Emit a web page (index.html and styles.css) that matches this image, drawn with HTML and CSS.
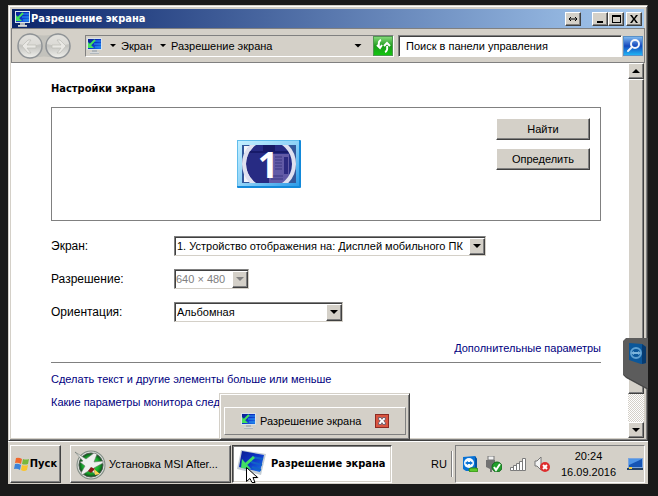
FILE: index.html
```html
<!DOCTYPE html>
<html lang="ru">
<head>
<meta charset="utf-8">
<title>Разрешение экрана</title>
<link rel="stylesheet" href="styles.css">
</head>
<body>
<svg class="defs" aria-hidden="true">
  <defs>
    <linearGradient id="blue" x1="0" y1="0" x2="1" y2="1"><stop offset="0" stop-color="#0a1c8c"/><stop offset=".5" stop-color="#0d34c8"/><stop offset="1" stop-color="#1c7ae8"/></linearGradient>
    <linearGradient id="silver" x1="0" y1="0" x2="0" y2="1"><stop offset="0" stop-color="#d8d8d6"/><stop offset=".5" stop-color="#c4c4c0"/><stop offset="1" stop-color="#f0f0ec"/></linearGradient>
    <linearGradient id="glass" x1="0" y1="0" x2="1" y2="1"><stop offset="0" stop-color="#c4efff"/><stop offset=".5" stop-color="#8fd2f7"/><stop offset="1" stop-color="#2b9be8"/></linearGradient>
    <radialGradient id="green"><stop offset="0" stop-color="#3cff48"/><stop offset=".7" stop-color="#17a82c"/><stop offset="1" stop-color="#0b4d18"/></radialGradient>
    <symbol id="display" viewBox="0 0 16 16">
      <path d="M1 0h15v12H1z" fill="#d7e2e8"/><path d="M2 1h13v10H2z" fill="url(#blue)"/>
      <path d="M9 3h6M8 6h7M9 9h6" stroke="#2b9af4"/>
      <path d="M9 2 4 7" stroke="#43e05c" stroke-width="2"/><path d="M2 4v6h6z" fill="#43e05c"/>
      <path d="M6 12h5v2H6z" fill="#aeb4b8"/><path d="M4 14h9v1H4z" fill="#d6dadd"/><path d="M4 15h9v1H4z" fill="#b2b8bc"/>
    </symbol>
    <symbol id="teamviewer" viewBox="0 0 16 16">
      <path d="M1 1l12-1 2 3v12H4L1 13z" fill="#0872d6"/><path d="M13 0l2 3v12l-2-2z" fill="#0453a4"/>
      <circle cx="7" cy="7" r="5" fill="#f4faff"/><path d="M3 7l3-2v1h2V5l3 2-3 2V8H6v1z" fill="#0872d6"/>
    </symbol>
  </defs>
</svg>
<div class="desktop">
  <section class="window">
    <header class="titlebar">
      <svg class="icon16"><use href="#display"/></svg>
      <h1>Разрешение экрана</h1>
      <button class="caption" aria-label="Изменить размер"><svg viewBox="0 0 10 8"><path d="M1 4h8M3 2 1 4l2 2M7 2l2 2-2 2" fill="none" stroke="#000"/></svg></button>
      <div class="caption-group">
        <button class="caption" aria-label="Свернуть"><svg viewBox="0 0 10 8"><path d="M2 6h6v2H2z"/></svg></button><button class="caption" aria-label="Развернуть"><svg viewBox="0 0 10 8"><path d="M1 0h9v8H1zM2 2v5h7V2z" fill-rule="evenodd"/></svg></button>
      </div>
      <button class="caption close" aria-label="Закрыть"><svg viewBox="0 0 10 8"><path d="M1 0h2l2 3 2-3h2L6 4l3 4H7L5 5 3 8H1l3-4z"/></svg></button>
    </header>
    <nav class="toolbar">
      <svg class="travel" viewBox="0 0 56 28" role="img" aria-label="Назад и вперёд">
        <path d="M13 1Q28 6 43 1v26q-15-5-30 0z" fill="#c3c2bc"/>
        <g fill="url(#silver)" stroke="#8f9396" stroke-width="1.500"><circle cx="14" cy="14" r="12"/><circle cx="42" cy="14" r="12"/></g>
        <path d="M3 12a11 9 0 0 1 22 0q-11 3-22 0zM31 12a11 9 0 0 1 22 0q-11 3-22 0z" fill="#ecebe6" opacity=".55"/>
        <g fill="#e9e8e4" stroke="#bcbbb6" stroke-width=".7"><path d="M6 14l6-6h3l-4 5h9v3h-9l4 5h-3z"/><path d="M50 14l-6-6h-3l4 5h-9v3h9l-4 5h3z"/></g>
      </svg>
      <div class="address">
        <svg class="icon16"><use href="#display"/></svg>
        <i class="arrow small"></i><a href="#">Экран</a><i class="arrow small"></i><a href="#" class="here">Разрешение экрана</a>
        <i class="arrow"></i>
        <button class="refresh" aria-label="Обновить"><svg viewBox="0 0 18 18"><path d="M7 3Q4 4 5 9M3 8l3 3 2-3M11 15q3-1 2-6M10 9l3-3 3 3" fill="none" stroke="#fff" stroke-width="2"/></svg></button>
      </div>
      <input class="search" type="text" aria-label="Поиск" value="Поиск в панели управления">
      <button class="find" aria-label="Найти в панели"><svg viewBox="0 0 18 18"><circle cx="11" cy="7" r="4" fill="none" stroke="#f2f5fa" stroke-width="2"/><path d="M8 10l-4 4" stroke="#f2f5fa" stroke-width="2" stroke-linecap="round"/></svg></button>
    </nav>
    <div class="view">
      <main>
        <h2>Настройки экрана</h2>
        <div class="preview">
          <svg class="monitor" viewBox="0 0 64 48" role="img" aria-label="Монитор 1">
            <rect width="64" height="48" rx="1" fill="#1289da"/><rect width="62" height="46" fill="#61bdec"/><rect x="1" y="1" width="61" height="45" fill="url(#glass)"/>
            <svg x="5" y="5" width="54" height="38" viewBox="0 0 54 38">
              <path d="M0 0h54v38H0z" fill="#33589b"/><path d="M2 1h9v36H2z" fill="#f4f5fa"/><path d="M5 3h2v2H5z" fill="#445"/><path d="M2 8h6v1H2z" fill="#667"/>
              <circle cx="27" cy="19" r="23" fill="#272b83"/><path d="M27 9h20v29H27z" fill="#625aa6"/><path d="M21 0h12v6H21z" fill="#181a65"/>
              <path d="M33 12h7M33 15h7M33 18h7M33 21h7M33 24h7M29 31h12M29 34h12" stroke="#3b3682"/><path d="M42 12h4v17h-4z" fill="#2c2980"/><path d="M5 7h43" stroke="#171a69" stroke-width="2"/>
              <circle cx="27" cy="19" r="25" fill="none" stroke="#dfe0ef" stroke-width="4"/>
            </svg>
            <text x="31" y="38" text-anchor="middle" class="number">1</text>
          </svg>
          <div class="actions"><button>Найти</button><button>Определить</button></div>
        </div>
        <form class="fields">
          <label for="screen">Экран:</label>
          <span class="combo wide"><select id="screen"><option>1. Устройство отображения на: Дисплей мобильного ПК</option></select></span>
          <label for="resolution">Разрешение:</label>
          <span class="combo short off"><select id="resolution" disabled><option>640 × 480</option></select></span>
          <label for="orientation">Ориентация:</label>
          <span class="combo medium"><select id="orientation"><option>Альбомная</option></select></span>
        </form>
        <p class="more"><a href="#">Дополнительные параметры</a></p>
        <p class="help"><a href="#">Сделать текст и другие элементы больше или меньше</a></p>
        <p class="help"><a href="#">Какие параметры монитора след</a></p>
      </main>
      <div class="scrollbar">
        <button aria-label="Вверх"><i class="arrow up"></i></button>
        <div class="thumb"></div><div class="track"></div>
        <button aria-label="Вниз"><i class="arrow"></i></button>
      </div>
    </div>
    <div class="thumbnail">
      <div class="thumbnail-row">
        <svg class="icon16"><use href="#display"/></svg><span>Разрешение экрана</span>
        <button aria-label="Закрыть окно"><svg viewBox="0 0 14 14"><path d="M3 3h3l1 2 1-2h3v2L9 7l2 2v2H8L7 9l-1 2H3V9l2-2-2-2z" fill="#fff" stroke="#5a5366"/></svg></button>
      </div>
    </div>
    <div class="side-tab">
      <svg class="side-shape" viewBox="0 0 25 52"><path d="M3 0h22v52L3 40 0 37V3z" fill="#5c5c5c"/><path d="M25 51 3 39 1 37" fill="none" stroke="#444"/><path d="M6 5l13 1 4 3v16l-5 1-12-4z" fill="#0b579a"/><path d="M19 6l4 3v16l-4 1z" fill="#073b70"/><circle cx="13" cy="15" r="5" fill="none" stroke="#5fa0d0" stroke-width="2"/><path d="M8 15l3-2v1h4v-1l3 2-3 2v-1h-4v1z" fill="#7db5dc"/></svg>
    </div>
  </section>
  <footer class="taskbar">
    <button class="start"><svg viewBox="0 0 16 15"><path d="M2 1q3-1 6 1L7 7Q4 5 1 6z" fill="#f1672c"/><path d="M9 2q3 1 6 0l-1 5q-3 1-6 0z" fill="#79b83c"/><path d="M1 7q3-1 6 1l-1 5Q3 11 0 12z" fill="#3c83d8"/><path d="M8 8q3 1 6 0l-1 5q-3 2-6 0z" fill="#fac52e"/></svg>Пуск</button>
    <button class="task"><svg viewBox="0 0 32 32"><circle cx="17" cy="17" r="14.500" fill="#7f8a82"/><circle cx="17" cy="17" r="13.500" fill="#d5dbd6"/><circle cx="17" cy="17" r="12" fill="url(#green)" stroke="#4d5950"/><path d="M1 4l11 7 8-6 3 1-3 8 9-1v2l-9 5 1 6-5-4-8 5-1-2 4-7-5-4 3-1z" fill="#eef0ee" stroke="#6c746d" stroke-width=".6"/><path d="M17 19l4 2-4 4-3-2z" fill="#8a1919"/><path d="M20 21l6 5-5 1z" fill="#ffd456"/></svg><span>Установка MSI After...</span></button>
    <button class="task active">
      <svg viewBox="0 0 32 32"><path d="M5 2l25 4-5 21-24-6z" fill="#c3cdd5"/><path d="M6 3l22 4-4 17-21-5z" fill="url(#blue)"/><path d="M16 9l11 2M15 14l11 3M16 19l9 3" stroke="#1262c8" stroke-width="2"/><path d="M18 9 9 17" stroke="#42df63" stroke-width="3"/><path d="M6 11l-1 9 10 1z" fill="#42df63"/><path d="M12 25l8 2 3 3-10 1z" fill="#b4b9bc"/></svg>
      <span>Разрешение экрана</span>
      <svg class="cursor" viewBox="0 0 12 16"><path d="M.5.5v14l3.500-3 2 4h3l-2-5h4.500z" fill="#fff" stroke="#000"/></svg>
    </button>
    <span class="language">RU</span>
    <div class="tray">
      <svg class="icon16" viewBox="0 0 16 16"><use href="#teamviewer"/><rect x="7" y="12" width="9" height="4" rx="2" fill="#5cc72e" stroke="#2c8914"/></svg>
      <svg class="icon16" viewBox="0 0 16 16"><path d="M2 0h6v4H2z" fill="#f1f1f1" stroke="#777"/><path d="M0 4h9v7l-3 2v3H4v-3L0 11z" fill="#727272"/><circle cx="11" cy="11" r="5" fill="#23a02d" stroke="#116a1a"/><path d="M8 11l2 3 4-6" fill="none" stroke="#fff" stroke-width="2"/></svg>
      <svg class="icon16" viewBox="0 0 16 16"><g fill="#fff" stroke="#7b7b7b"><path d="M.5 11.500h3v3h-3zM3.500 9.500h3v5h-3zM6.500 7.500h3v7h-3zM9.500 5.500h3v9h-3zM12.500 2.500h3v12h-3z"/></g></svg>
      <svg class="icon16" viewBox="0 0 16 16"><path d="M1 5h2l4-4v13l-4-4H1z" fill="#f3f3f3" stroke="#777"/><circle cx="11" cy="11" r="5" fill="#dd2d2d"/><path d="M9 9l4 4M13 9l-4 4" stroke="#fff" stroke-width="2"/></svg>
      <time>20:24<br>16.09.2016</time>
      <svg class="icon16" viewBox="0 0 16 16"><path d="M1 2h15v10H1z" fill="#7ba4dc"/><path d="M2 3h13v8H2z" fill="#1554b4"/><path d="M2 3h13L2 9z" fill="#4e94e6"/><path d="M0 12h16v2H0z" fill="#244266"/><path d="M2 11h3v2H2z" fill="#f3ce43"/></svg>
    </div>
  </footer>
</div>
</body>
</html>
```

FILE: styles.css
```css
* { box-sizing: border-box; }
:root { --face: #d4d0c8; --shade: #808080; --dark: #404040; --link: #000080; --bold: "DejaVu Sans Condensed", "DejaVu Sans", sans-serif; }
body {
  margin: 0; padding: 5px 10px 12px 8px; min-height: 100vh; display: flex;
  background: #1a1a1a; color: #000;
  font: 11px/16px "Liberation Sans", sans-serif;
}
h1, h2, p { margin: 0; font-size: 11px; }
a { color: inherit; text-decoration: none; }
button, input, select { font: inherit; color: inherit; margin: 0; border-radius: 0; }
button {
  padding: 0; background: var(--face); border: 1px solid;
  border-color: #fff var(--dark) var(--dark) #fff;
  box-shadow: inset -1px -1px var(--shade);
  display: flex; align-items: center; justify-content: center;
}
.defs { position: absolute; width: 0; height: 0; }
.icon16 { width: 16px; height: 16px; flex: none; }
.desktop { flex: 1; min-width: 0; display: flex; flex-direction: column; background: var(--face); }

.window {
  position: relative; flex: 1; display: flex; flex-direction: column; padding: 2px;
  background: var(--face); border: 1px solid;
  border-color: var(--face) var(--dark) var(--dark) var(--face);
  box-shadow: inset 1px 1px #fff, inset -1px -1px var(--shade);
}
.titlebar {
  height: 19px; margin: 1px 1px 0; padding-left: 2px; display: flex; align-items: center;
  background: linear-gradient(90deg, #0a246a, #a6caf0);
}
.titlebar h1 { flex: 1; padding-left: 1px; color: #fff; font-weight: bold; font-family: var(--bold); }
.caption { width: 16px; height: 14px; }
.caption svg { width: 10px; height: 8px; }
.caption-group { display: flex; margin-left: 11px; }
.close { margin: 0 2px; }

.toolbar {
  height: 35px; padding: 0 1px 0 4px; display: flex; align-items: center;
  border: 1px solid var(--shade);
}
.travel { width: 56px; height: 28px; }
.address {
  flex: 1; min-width: 0; height: 22px; margin: 0 4px 0 13px; display: flex; align-items: center; gap: 5px;
  border: 1px solid; border-color: var(--shade) #fff #fff var(--shade);
}
.address .here { flex: 1; }
.arrow { flex: none; width: 8px; height: 4px; background: #000; clip-path: polygon(0 0, 100% 0, 50% 100%); }
.arrow.small { width: 6px; height: 3px; margin-left: 3px; }
.arrow.up { clip-path: polygon(50% 0, 100% 100%, 0 100%); }
.refresh { width: 20px; height: 20px; margin-left: 6px; background: linear-gradient(#82d878, #1d9c1b 50%, #12c510); border-color: #4f9650; box-shadow: none; }
.refresh svg, .find svg { width: 18px; height: 18px; }
.search {
  width: 224px; height: 22px; padding: 0 7px; background: #fff; border: 1px solid;
  border-color: var(--shade) #fff #fff var(--shade); box-shadow: inset 1px 1px var(--dark);
}
.find { width: 20px; height: 20px; margin-left: 1px; background: linear-gradient(#7eb7ee, #1549bd 50%, #20b3f4); border-color: #5890c8; box-shadow: none; }

.view { flex: 1; display: flex; background: #fff; margin-right: 1px; }
main { flex: 1; min-width: 0; padding: 18px 27px 0 40px; }
h2 { font-weight: bold; font-family: var(--bold); }
.preview {
  display: grid; grid-template-columns: 185px 64px 1fr; align-items: center;
  height: 114px; margin-top: 10px; padding: 0 10px 0 0; border: 1px solid var(--shade);
}
.monitor { grid-column: 2; width: 64px; height: 48px; overflow: visible; }
.number { font: bold 36px "Open Sans", sans-serif; fill: #fff; }
.actions { justify-self: end; align-self: start; padding-top: 10px; display: grid; gap: 8px; }
.actions button { width: 94px; height: 22px; }
.fields { display: grid; grid-template-columns: 123px 1fr; row-gap: 13px; align-items: center; margin-top: 15px; }
.fields label { font-size: 12px; line-height: 20px; }
.combo { position: relative; display: block; height: 20px; }
.wide { width: 312px; }
.short { width: 75px; }
.medium { width: 169px; }
select {
  display: block; appearance: none; width: 100%; height: 20px; padding: 0 17px 0 2px; background: #fff; opacity: 1; border: 1px solid;
  border-color: var(--shade) var(--face) var(--face) var(--shade); box-shadow: inset 1px 1px var(--dark);
}
.combo::before {
  content: ""; position: absolute; top: 2px; right: 1px; width: 16px; height: 17px; background: var(--face); border: 1px solid;
  border-color: #fff var(--dark) var(--dark) #fff; box-shadow: inset -1px -1px var(--shade); box-sizing: border-box;
}
.combo::after {
  content: ""; position: absolute; top: 8px; right: 5px; width: 8px; height: 4px; background: #000;
  clip-path: polygon(0 0, 100% 0, 50% 100%);
}
.combo::before, .combo::after { pointer-events: none; }
.off select { color: var(--shade); padding-left: 1px; }
.off::after { background: var(--shade); }
.more { margin-top: 18px; padding-bottom: 6px; text-align: right; color: var(--link); border-bottom: 1px solid var(--shade); }
.help { margin-top: 8px; color: var(--link); }
.help + .help { margin-top: 7px; }
.scrollbar { width: 16px; display: flex; flex-direction: column; background: var(--face); }
.scrollbar button { width: 16px; height: 16px; }
.thumb { flex: 313; border: 1px solid; border-color: #fff var(--dark) var(--dark) #fff; box-shadow: inset -1px -1px var(--shade); }
.track { flex: 28; background: repeating-conic-gradient(#fff 0 25%, var(--face) 0 50%) 0 0 / 2px 2px; }

.thumbnail {
  position: absolute; left: 210px; bottom: 0; width: 191px; height: 47px; padding: 13px 3px 4px 4px; background: var(--face);
  border: 1px solid; border-color: var(--face) var(--dark) var(--dark) var(--face); box-shadow: inset 1px 1px #fff, inset -1px -1px var(--shade);
}
.thumbnail-row { height: 28px; padding: 0 16px 0 15px; display: flex; align-items: center; gap: 4px; border: 1px solid; border-color: #fff var(--shade) var(--shade) #fff; }
.thumbnail-row span { flex: 1; white-space: nowrap; }
.thumbnail-row button { width: 14px; height: 14px; background: #d95540; border-color: #8c2a22; box-shadow: none; }
.thumbnail-row button svg { width: 12px; height: 12px; }
.side-tab { position: absolute; right: -1px; top: 332px; width: 25px; height: 52px; }
.side-shape { display: block; width: 25px; height: 52px; }

.taskbar { height: 43px; padding: 3px 2px 1px; display: flex; align-items: center; border-top: 1px solid #fff; }
.start { width: 51px; height: 38px; font: bold 11px/14px var(--bold); }
.start svg { width: 16px; height: 15px; }
.task { width: 161px; height: 38px; margin-left: 9px; padding: 0 3px; justify-content: flex-start; gap: 3px; white-space: nowrap; }
.task > svg:first-child { width: 32px; height: 32px; flex: none; }
.active {
  position: relative; width: 160px; margin-left: 1px; background: #fff; font-weight: bold; font-family: var(--bold);
  border-color: var(--dark) #fff #fff var(--dark); box-shadow: inset 1px 1px var(--shade), inset -1px -1px var(--face);
}
.cursor { position: absolute; left: 13px; bottom: -1px; width: 12px; height: 16px; }
.language { margin-left: auto; padding: 5px 4px 5px 0; border-right: 1px solid var(--shade); box-shadow: 1px 0 #fff; }
.tray {
  width: 190px; height: 38px; margin: 0 1px 0 3px; padding: 0 1px 0 6px; display: flex; align-items: center; gap: 8px;
  border: 1px solid; border-color: var(--shade) #fff #fff var(--shade);
}
time { flex: 1; text-align: center; line-height: 16px; }
```
